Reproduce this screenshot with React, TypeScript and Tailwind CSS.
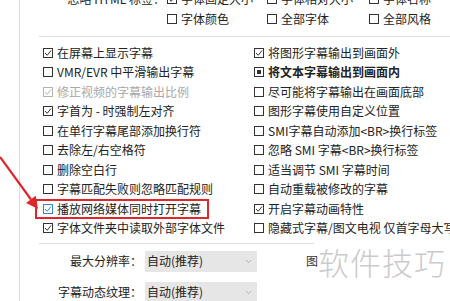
import React from 'react'
import { ChevronDown } from 'lucide-react'

type BoxState = 'off' | 'on' | 'fill'

interface Option {
  label: string
  state: BoxState
  disabled?: boolean
  bold?: boolean
  blue?: boolean
}

const leftOptions: Option[] = [
  { label: '在屏幕上显示字幕', state: 'on' },
  { label: 'VMR/EVR 中平滑输出字幕', state: 'off' },
  { label: '修正视频的字幕输出比例', state: 'on', disabled: true },
  { label: '字首为 - 时强制左对齐', state: 'on' },
  { label: '在单行字幕尾部添加换行符', state: 'off' },
  { label: '去除左/右空格符', state: 'off' },
  { label: '删除空白行', state: 'off' },
  { label: '字幕匹配失败则忽略匹配规则', state: 'off' },
  { label: '播放网络媒体同时打开字幕', state: 'on', blue: true },
  { label: '字体文件夹中读取外部字体文件', state: 'on' },
]

const rightOptions: Option[] = [
  { label: '将图形字幕输出到画面外', state: 'on' },
  { label: '将文本字幕输出到画面内', state: 'fill', bold: true },
  { label: '尽可能将字幕输出在画面底部', state: 'off' },
  { label: '图形字幕使用自定义位置', state: 'off' },
  { label: 'SMI字幕自动添加<BR>换行标签', state: 'off' },
  { label: '忽略 SMI 字幕<BR>换行标签', state: 'off' },
  { label: '适当调节 SMI 字幕时间', state: 'off' },
  { label: '自动重载被修改的字幕', state: 'off' },
  { label: '开启字幕动画特性', state: 'on' },
  { label: '隐藏式字幕/图文电视 仅首字母大写', state: 'off' },
]

function Box({ state, disabled, blue }: { state: BoxState; disabled?: boolean; blue?: boolean }) {
  const color = disabled ? '#b4b4b4' : blue ? '#3a86c8' : '#333333'
  return (
    <span
      className="inline-flex items-center justify-center w-[10px] h-[10px] border shrink-0 bg-white"
      style={{ borderColor: color }}
    >
      {state === 'on' && (
        <svg width="8" height="8" viewBox="0 0 8 8">
          <polyline points="1,4 3.2,6.3 7,1.5" fill="none" stroke={color} strokeWidth="1" />
        </svg>
      )}
      {state === 'fill' && <span className="w-[4px] h-[4px] bg-[#333]" />}
    </span>
  )
}

function Check({ opt }: { opt: Option }) {
  return (
    <div className="h-[19.5px] flex items-center gap-[4px] whitespace-nowrap">
      <Box state={opt.state} disabled={opt.disabled} blue={opt.blue} />
      <span
        className={`${opt.disabled ? 'text-[#a8a8a8]' : 'text-[#222]'} ${opt.bold ? 'font-bold' : ''}`}
      >
        {opt.label}
      </span>
    </div>
  )
}

function Select({ value }: { value: string }) {
  return (
    <div className="w-[112px] h-[21px] bg-[#e6e6e6] flex items-center justify-between pl-[2px] pr-[4px]">
      <span className="text-[#222]">{value}</span>
      <ChevronDown size={9} color="#8a8a8a" strokeWidth={1.5} />
    </div>
  )
}

export default function App() {
  return (
    <div
      className="relative w-[450px] h-[301px] overflow-hidden bg-white flex text-[12px] leading-none text-[#222]"
      style={{ fontFamily: '"Noto Sans CJK SC", "Noto Sans", sans-serif' }}
    >
      <div className="w-[20px] shrink-0 border-r border-[#dcdcdc]" />

      <div className="flex-1 flex flex-col pl-[19px]">
        {/* subtitle style overrides */}
        <div className="mt-[-11px] mb-[7px] grid grid-cols-[128px_100px_102px_1fr]">
          <div className="h-[20px] flex items-center justify-end pr-[2px]">忽略 HTML 标签：</div>
          <div className="h-[20px] flex items-center gap-[4px] whitespace-nowrap">
            <Box state="on" />
            <span>字体固定大小</span>
          </div>
          <div className="h-[20px] flex items-center gap-[4px] whitespace-nowrap">
            <Box state="off" />
            <span>字体相对大小</span>
          </div>
          <div className="h-[20px] flex items-center gap-[4px] whitespace-nowrap">
            <Box state="off" />
            <span>字体名称</span>
          </div>
          <div />
          <div className="h-[20px] flex items-center gap-[4px] whitespace-nowrap">
            <Box state="off" />
            <span>字体颜色</span>
          </div>
          <div className="h-[20px] flex items-center gap-[4px] whitespace-nowrap">
            <Box state="off" />
            <span>全部字体</span>
          </div>
          <div className="h-[20px] flex items-center gap-[4px] whitespace-nowrap">
            <Box state="off" />
            <span>全部风格</span>
          </div>
        </div>

        <div className="border-t border-[#dedede]" />

        <div className="grid grid-cols-[211px_1fr] pl-[4px] pt-[6px] pb-[5px]">
          <div className="flex flex-col">
            {leftOptions.map((o) => (
              <Check key={o.label} opt={o} />
            ))}
          </div>
          <div className="flex flex-col">
            {rightOptions.map((o) => (
              <Check key={o.label} opt={o} />
            ))}
          </div>
        </div>

        <div className="w-[275px] border-t border-[#dedede]" />

        <div className="flex flex-col gap-[9px] pt-[6px]">
          <div className="flex items-center h-[22px]">
            <div className="w-[106px] text-right pr-[3px]">最大分辨率：</div>
            <Select value="自动(推荐)" />
            <span className="ml-[49px] text-[#333]">图</span>
          </div>
          <div className="flex items-center h-[22px]">
            <div className="w-[106px] text-right pr-[3px]">字幕动态纹理：</div>
            <Select value="自动(推荐)" />
          </div>
        </div>
      </div>

      {/* annotation: red highlight + arrow */}
      <div className="absolute left-[35px] top-[199px] w-[174px] h-[20px] border-2 border-[#e0262b]" />
      <svg className="absolute left-0 top-0" width="60" height="230" viewBox="0 0 60 230">
        <line x1="0" y1="157" x2="31" y2="199.5" stroke="#e0262b" strokeWidth="2.2" />
        <polygon points="38,209 26.1,203 35.7,195.8" fill="#e0262b" />
      </svg>

      {/* watermark */}
      <div className="absolute left-[318px] top-[246px] text-[31px] leading-none font-light text-[#cbcbcb] tracking-[1px]">
        软件技巧
      </div>
    </div>
  )
}
